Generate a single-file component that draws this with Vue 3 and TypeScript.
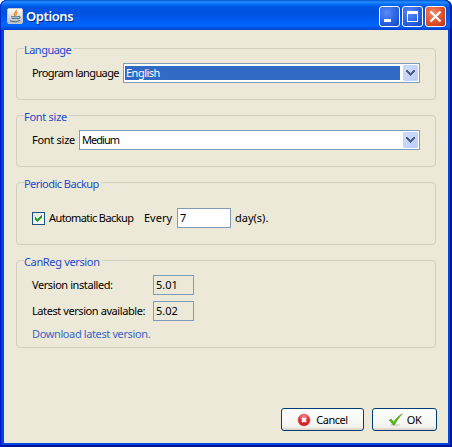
<script setup lang="ts">
import { ref } from 'vue'

const language = ref<string>('English')
const fontSize = ref<string>('Medium')
const interval = ref<string>('7')
const automatic = ref<boolean>(true)
</script>

<template>
  <div class="window">
    <header class="titlebar">
      <svg class="java" width="16" height="16" viewBox="0 0 16 16">
        <defs>
          <linearGradient id="jbg" x1="0" y1="0" x2="0" y2="1"><stop offset="0" stop-color="#fff" /><stop offset="1" stop-color="#b9bdc0" /></linearGradient>
        </defs>
        <rect x=".5" y=".5" width="15" height="15" rx="1.5" fill="url(#jbg)" stroke="#c8c8c4" />
        <path d="M9.3 2C10 4 5.8 4.7 7.7 8M10.5 4.2C8.3 5.2 9.5 6 8.5 7.8" fill="none" stroke="#f28a24" stroke-width="1.3" />
        <path d="M4 8.8h7M4.7 10.5h6M3 12.8c3 1 7 1 10-.3M11 8.6c3-.6 2.5 2-.2 2.3" fill="none" stroke="#50728c" stroke-width="1.1" />
      </svg>
      <h1>Options</h1>
      <div class="controls">
        <button class="ctl" aria-label="Minimize"><svg width="21" height="21"><rect x="5" y="13" width="7" height="3" fill="#fff" /></svg></button>
        <button class="ctl" aria-label="Maximize"><svg width="21" height="21"><path d="M5 5h11v11H5zM6 8v7h9V8z" fill="#fff" fill-rule="evenodd" /></svg></button>
        <button class="ctl close" aria-label="Close"><svg width="21" height="21"><path d="M5.5 5.5l10 10M15.5 5.5l-10 10" stroke="#fff" stroke-width="2.3" /></svg></button>
      </div>
    </header>

    <main class="content">
      <section class="group language">
        <h2>Language</h2>
        <div class="row">
          <label class="t-plang">Program language</label>
          <div class="combo">
            <div class="value selected">{{ language }}</div>
            <button class="drop" aria-label="Open"><svg width="15" height="16" shape-rendering="crispEdges"><path d="M3 5h2v1h1v1h1v1h1V7h1V6h1V5h2v2h-1v1h-1v1H9v1H8v1H7v-1H6V9H5V8H4V7H3z" fill="#4d6185" /></svg></button>
          </div>
        </div>
      </section>

      <section class="group font">
        <h2 class="t-fs">Font size</h2>
        <div class="row">
          <label class="t-fsize t-fs">Font size</label>
          <div class="combo">
            <div class="value t-medium">{{ fontSize }}</div>
            <button class="drop" aria-label="Open"><svg width="15" height="16" shape-rendering="crispEdges"><path d="M3 5h2v1h1v1h1v1h1V7h1V6h1V5h2v2h-1v1h-1v1H9v1H8v1H7v-1H6V9H5V8H4V7H3z" fill="#4d6185" /></svg></button>
          </div>
        </div>
      </section>

      <section class="group backup">
        <h2>Periodic Backup</h2>
        <div class="row">
          <span class="check" @click="automatic = !automatic">
            <svg v-if="automatic" width="11" height="11" shape-rendering="crispEdges"><path d="M2 4h1v1h1v1h1V5h1V4h1V3h1V2h1v3H8v1H7v1H6v1H5v1H4V8H3V7H2z" fill="#21a121" /></svg>
          </span>
          <label class="t-auto">Automatic Backup</label>
          <label class="t-every">Every</label>
          <div class="field days">{{ interval }}</div>
          <label class="t-days">day(s).</label>
        </div>
      </section>

      <section class="group version">
        <h2 class="t-cv">CanReg version</h2>
        <div class="row">
          <label class="vlabel">Version installed:</label>
          <div class="field ro">5.01</div>
        </div>
        <div class="row second">
          <label class="vlabel">Latest version available:</label>
          <div class="field ro">5.02</div>
        </div>
        <a class="link">Download latest version.</a>
      </section>

      <footer class="actions">
        <button class="btn cancel">
          <svg width="14" height="14" viewBox="0 0 14 14">
            <defs><radialGradient id="red" cx=".5" cy=".2" r=".8"><stop offset="0" stop-color="#f08a8a" /><stop offset=".6" stop-color="#dc2a32" /><stop offset="1" stop-color="#c3141c" /></radialGradient></defs>
            <circle cx="7" cy="7" r="6" fill="url(#red)" stroke="#e2606a" stroke-width=".7" />
            <path d="M5 5l4 4M9 5L5 9" stroke="#fff" stroke-width="2" />
          </svg>
          <span>Cancel</span>
        </button>
        <button class="btn ok">
          <svg width="15" height="14" viewBox="0 0 15 14">
            <ellipse cx="7" cy="12" rx="5" ry="1.2" fill="#dcdcd6" />
            <path d="M1 7.2L3.2 6l2.6 3C7.8 5.8 10.5 2.8 14.4.8 11 4.3 8.5 8 6.4 12H5.2C4 10 2.7 8.5 1 7.2z" fill="#58b51b" stroke="#43981a" stroke-width=".5" />
          </svg>
          <span>OK</span>
        </button>
      </footer>
    </main>
  </div>
</template>

<style>
body { background: #fff; overflow: hidden; }
</style>

<style scoped>
* { box-sizing: border-box; }
.window {
  width: 452px;
  height: 447px;
  display: flex;
  flex-direction: column;
  padding: 0 4px 4px;
  border-radius: 7px 7px 0 0;
  background: #0047e0;
  box-shadow: inset 1px 0 #0019cf, inset -2px 0 #00139a, inset 0 -2px #00139a, inset 2px 0 #0831d9;
  font-family: "Noto Sans", "Open Sans", sans-serif;
  font-size: 11px;
  line-height: 14px;
  color: #000;
  overflow: hidden;
}
.titlebar {
  height: 30px;
  flex: none;
  margin: 0 -4px;
  padding: 2px 6px 0 7px;
  display: flex;
  align-items: center;
  border-radius: 7px 7px 0 0;
  background: linear-gradient(#0058d4 0, #2a8bff 2px, #0873fa 4px, #0054e3 7px, #0053e1 14px, #005cf2 20px, #0066ff 25px, #005bf0 27px, #0040c8 30px);
  box-shadow: inset 1px 0 #0030c8, inset -2px 0 #0020a0;
}
.java { flex: none; }
h1 {
  margin: 0 0 0 3px;
  color: #fff;
  font-size: 13px;
  font-weight: 600;
  line-height: 18px;
  letter-spacing: -0.4px;
  text-shadow: 1px 1px #0a2a86;
  white-space: nowrap;
}
.controls { margin-left: auto; display: flex; gap: 2px; }
.ctl {
  width: 21px;
  height: 21px;
  padding: 0;
  border: 1px solid #fff;
  border-radius: 3px;
  background: radial-gradient(circle at 35% 30%, #5a8cf5, #2b62e4 55%, #1744c4);
}
.ctl svg { display: block; margin: -1px; }
.close { background: radial-gradient(circle at 35% 30%, #f08a68, #e0502c 55%, #c03410); }
.content {
  flex: 1;
  min-height: 0;
  display: flex;
  flex-direction: column;
  padding: 18px 12px 12px;
  background: #ece9d8;
}
.group {
  border: 1px solid #d0d0bf;
  border-radius: 4px;
  flex: none;
  padding: 0 15px;
}
.language, .font { height: 52px; }
.font, .backup, .version { margin-top: 15px; }
.backup { height: 63px; }
.version { height: 88px; }
h2 {
  width: max-content;
  height: 14px;
  margin: -6px 0 0 -8px;
  padding: 0 2px 0 0;
  background: #ece9d8;
  color: #1c49cf;
  font-size: 11px;
  font-weight: 400;
  line-height: 14px;
  letter-spacing: -0.53px;
  white-space: nowrap;
}
label { white-space: nowrap; flex: none; }
.row { display: flex; align-items: center; height: 20px; margin-top: 6px; }
.combo {
  flex: 1;
  height: 20px;
  display: flex;
  padding: 1px;
  border: 1px solid #7f9db9;
  background: #fff;
  gap: 3px;
}
.value { flex: 1; margin: 1px 0; padding-left: 1px; line-height: 14px; }
.selected { background: #316ac5; color: #fff; letter-spacing: -0.5px; }
.drop {
  width: 15px;
  height: 16px;
  padding: 0;
  border: 0;
  border-radius: 2px;
  background: linear-gradient(135deg, #d3defd, #b9ccfa);
  box-shadow: inset 0 0 0 1px #c3d2fa;
}
.drop svg { display: block; }
.backup .row { margin-top: 17px; }
.check {
  width: 13px;
  height: 13px;
  margin: 0 4px 0 0;
  border: 1px solid #1c5180;
  background: linear-gradient(135deg, #e1e1db, #fff);
}
.check svg { display: block; }
.field {
  height: 20px;
  border: 1px solid #7f9db9;
  background: #fff;
  padding: 2px 0 0 2px;
  line-height: 14px;
}
.days { width: 54px; }
.ro { width: 41px; background: #ece9d8; }
.version .second { margin-top: 6px; }
.vlabel { width: 121px; letter-spacing: -0.42px; }
.link { display: block; width: max-content; margin-top: 6px; color: #3b66c8; letter-spacing: -0.38px; white-space: nowrap; }
.actions { margin-top: auto; display: flex; justify-content: flex-end; gap: 8px; margin-right: -1px; }
.btn {
  height: 23px;
  border: 1px solid #003c74;
  border-radius: 3px;
  padding: 0;
  display: flex;
  align-items: center;
  justify-content: center;
  background: linear-gradient(#fff, #f3f3ee 85%, #d6d0c5);
  font: inherit;
  letter-spacing: -0.45px;
  color: #000;
  white-space: nowrap;
}
.cancel { width: 83px; gap: 5px; }
.ok { width: 65px; gap: 4px; }
.t-plang { width: 91px; letter-spacing: -0.6px; }
.t-fsize { width: 47px; }
.t-fs { letter-spacing: -0.28px; }
.t-cv { letter-spacing: -0.35px; }
.t-medium { letter-spacing: -0.95px; }
.t-auto { width: 95px; letter-spacing: -0.6px; }
.t-every { width: 33px; }
.t-days { margin-left: 4px; }
</style>
